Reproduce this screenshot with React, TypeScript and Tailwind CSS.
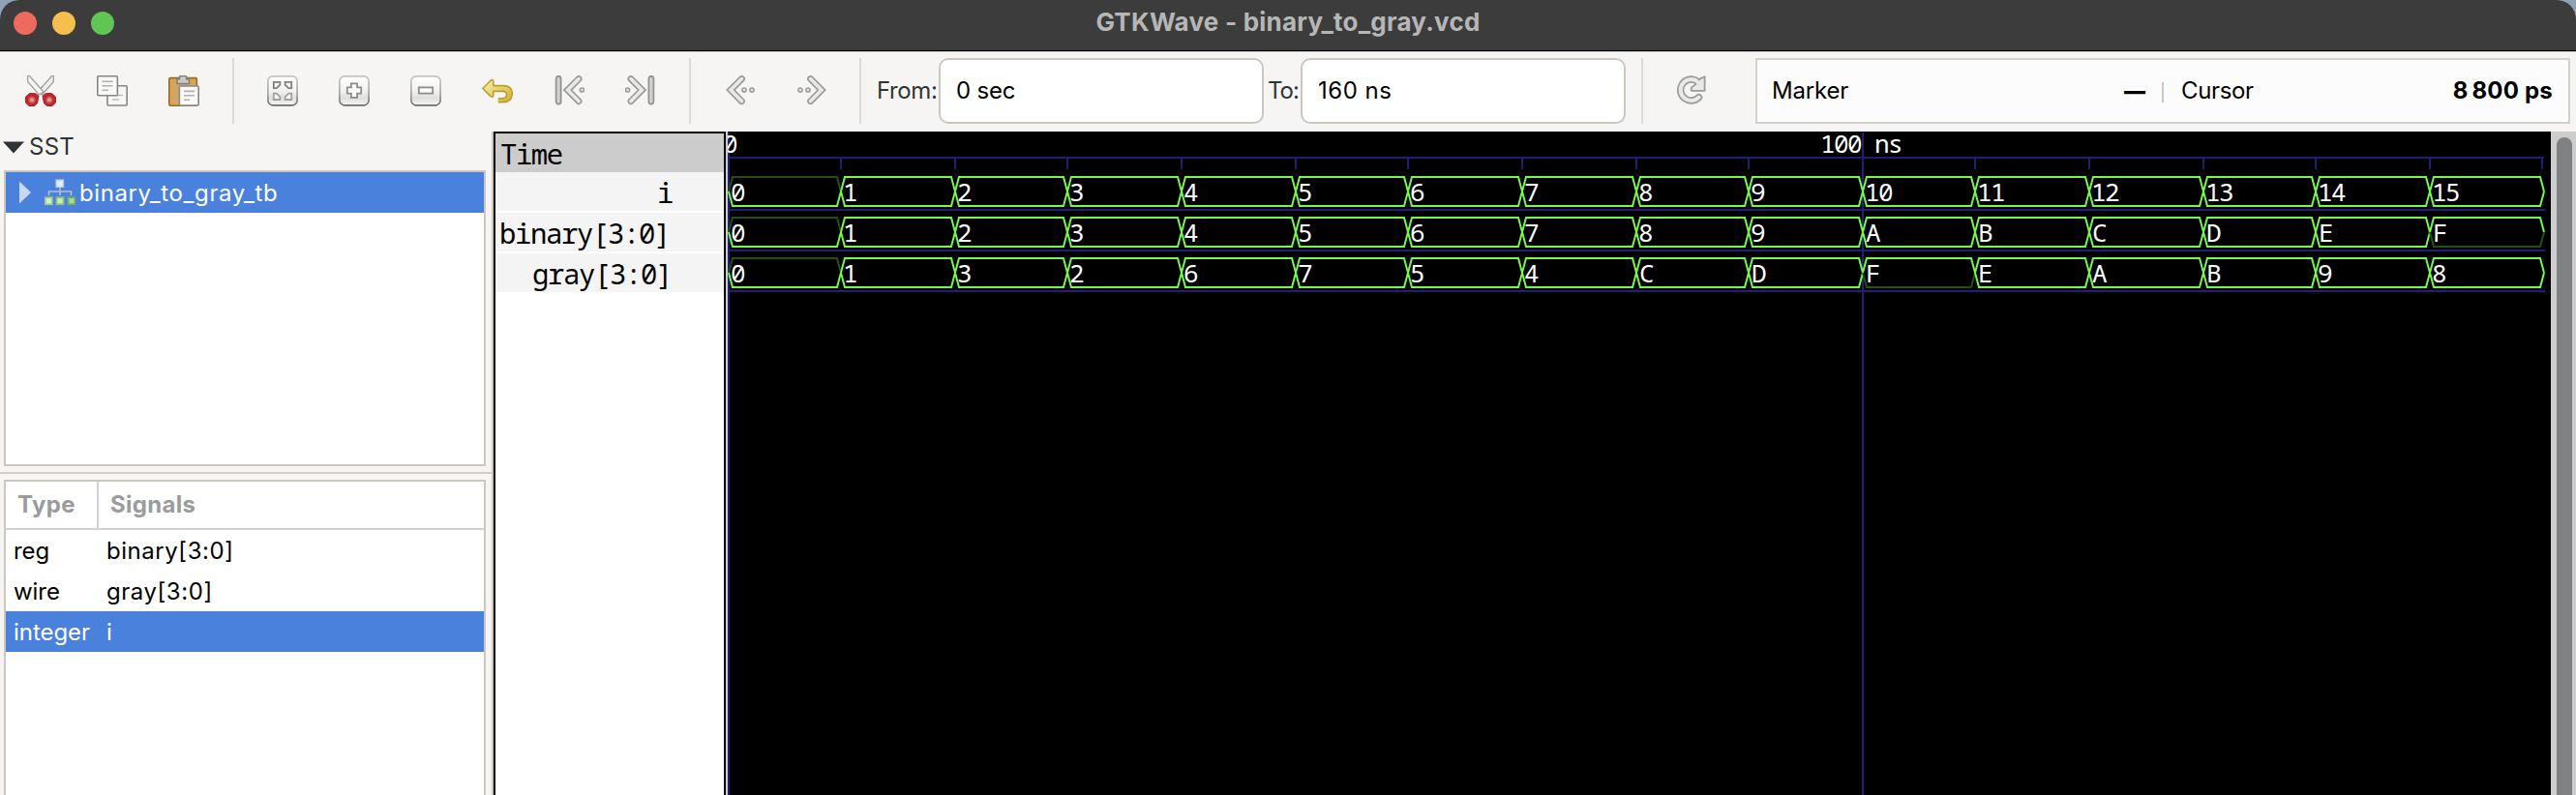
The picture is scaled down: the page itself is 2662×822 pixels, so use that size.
import type { ReactNode } from "react";

const MONO = "'Noto Sans Mono', 'DejaVu Sans Mono', monospace";

function Icon({ children, className = "" }: { children: ReactNode; className?: string }) {
  return (
    <svg viewBox="0 0 32 32" className={`h-8 w-8 shrink-0 ${className}`} fill="none">
      {children}
    </svg>
  );
}

function Defs() {
  return (
    <svg className="absolute h-0 w-0">
      <defs>
        <linearGradient id="btnFill" x1="0" y1="0" x2="0" y2="1">
          <stop offset="0" stopColor="#ffffff" />
          <stop offset="0.55" stopColor="#f0f0ef" />
          <stop offset="0.75" stopColor="#dededc" />
          <stop offset="1" stopColor="#f6f6f5" />
        </linearGradient>
        <linearGradient id="btnStroke" x1="0" y1="0" x2="0" y2="1">
          <stop offset="0" stopColor="#c3c5c0" />
          <stop offset="0.6" stopColor="#9fa19d" />
          <stop offset="1" stopColor="#6c6e69" />
        </linearGradient>
        <linearGradient id="undoFill" x1="0" y1="0" x2="1" y2="1">
          <stop offset="0" stopColor="#f9f1b4" />
          <stop offset="0.6" stopColor="#e2cb5c" />
          <stop offset="1" stopColor="#cdb036" />
        </linearGradient>
      </defs>
    </svg>
  );
}

function CutIcon() {
  return (
    <Icon>
      <path d="M29.3.5 V6.5 L17.5 20 L13 17 L27.5.5Z" fill="#eeeeec" stroke="#9a9c98" strokeWidth="1.2" />
      <path d="M2.7.5 V6.5 L14.5 20 L19 17 L4.5.5Z" fill="#f4f4f3" stroke="#9a9c98" strokeWidth="1.2" />
      <path d="M4.5 18.6H10.5L14 21.2L12.4 29L9.4 31.5H4L.6 28.2V22Z" fill="#b92a2c" stroke="#a42022" strokeWidth="1" strokeLinejoin="round" />
      <path d="M27.5 18.6H21.5L18 21.2L19.6 29L22.6 31.5H28L31.4 28.2V22Z" fill="#b92a2c" stroke="#a42022" strokeWidth="1" strokeLinejoin="round" />
      <circle cx="7" cy="25.3" r="2.8" fill="#cfa0a0" stroke="#dc5254" strokeWidth="1.6" />
      <circle cx="25" cy="25.3" r="2.8" fill="#cfa0a0" stroke="#dc5254" strokeWidth="1.6" />
    </Icon>
  );
}

function CopyIcon() {
  return (
    <Icon>
      <rect x="11" y="10.8" width="20.2" height="20.2" rx="1" fill="#f7f7f6" stroke="#868884" strokeWidth="1.6" />
      <path d="M16 20.5H27M16 25H23" stroke="#bdbebb" strokeWidth="1.6" />
      <rect x=".8" y=".8" width="20.6" height="20" rx="1" fill="#f9f9f8" stroke="#868884" strokeWidth="1.6" />
      <path d="M5.5 6.2H16.5M5.5 10.8H16.5M5.5 15.2H12" stroke="#b0b1ae" strokeWidth="1.6" />
    </Icon>
  );
}

function PasteIcon() {
  return (
    <Icon>
      <rect x=".8" y="2.6" width="28.6" height="28.6" rx="1.5" fill="#d3a562" stroke="#9c6b1d" strokeWidth="1.6" />
      <path d="M9 8.5V5.5Q9 3.8 11 3.8H11.5V1.5Q11.5.6 12.5.6H17.5Q18.6.6 18.6 1.5V3.8H19.5Q21.5 3.8 21.5 5.5V8.5Z" fill="#c9cac8" stroke="#7d7f7b" strokeWidth="1.4" />
      <rect x="11.4" y="11" width="19.8" height="20" rx="1" fill="#f9f9f8" stroke="#868884" strokeWidth="1.6" />
      <path d="M16 16.4H27M16 20.8H27M16 25.2H22" stroke="#b0b1ae" strokeWidth="1.6" />
    </Icon>
  );
}

function ButtonFrame({ children }: { children: ReactNode }) {
  return (
    <Icon>
      <rect x=".9" y=".9" width="30.2" height="29.8" rx="5" fill="url(#btnFill)" stroke="url(#btnStroke)" strokeWidth="1.6" />
      <path d="M4.5 31H27.5" stroke="#73756f" strokeWidth="1.2" />
      {children}
    </Icon>
  );
}

function ZoomFitIcon() {
  return (
    <ButtonFrame>
      <g strokeWidth="1.8" fill="#f7f7f6">
        <path d="M6.8 6.8H13.4V9.6L9.8 13.2H6.8Z" stroke="#7f817d" />
        <path d="M25.2 6.8H18.6V9.6L22.2 13.2H25.2Z" stroke="#7f817d" />
        <path d="M6.8 25H13.4V22.2L9.8 18.6H6.8Z" stroke="#a0a29e" />
        <path d="M25.2 25H18.6V22.2L22.2 18.6H25.2Z" stroke="#a0a29e" />
      </g>
    </ButtonFrame>
  );
}

function ZoomInIcon() {
  return (
    <ButtonFrame>
      <path d="M12.9 8.4H19.1V12.4H23.2V18.6H19.1V22.8H12.9V18.6H8.8V12.4H12.9Z" fill="#fdfdfd" stroke="#8b8d89" strokeWidth="1.8" />
    </ButtonFrame>
  );
}

function ZoomOutIcon() {
  return (
    <ButtonFrame>
      <rect x="8.8" y="12.4" width="14.4" height="6.2" fill="#fdfdfd" stroke="#8b8d89" strokeWidth="1.8" />
    </ButtonFrame>
  );
}

function UndoIcon() {
  return (
    <Icon>
      <path
        d="M.9 13.5L9 5.2Q11.8 3.6 11.8 6.2V10.6H22.5Q31.3 11 31.3 18.8Q31 27.4 22 27.6H16.5V23.8H21.5Q25.6 23.4 25.6 19.6Q25.2 16.6 21.5 16.4H11.8V20.6Q11.6 23 9 21.6Z"
        fill="url(#undoFill)"
      />
      <path
        d="M17 27.6H22Q31 27.4 31.3 18.8Q31.3 11 22.5 10.6H11.8V6.2Q11.8 3.6 9 5.2L.9 13.5L9 21.6Q11.6 23 11.8 20.6V16.4H21.5Q25.2 16.6 25.6 19.6Q25.6 23.4 21.5 23.8H17"
        stroke="#bba033"
        strokeWidth="1.6"
        strokeLinejoin="round"
      />
    </Icon>
  );
}

function Chevron({ d }: { d: string }) {
  return (
    <>
      <path d={d} stroke="#999b97" strokeWidth="7" strokeLinecap="round" />
      <path d={d} stroke="#e9e9e8" strokeWidth="3.6" strokeLinecap="round" />
    </>
  );
}

function Dot({ x }: { x: number }) {
  return <circle cx={x} cy="15" r="2.1" fill="#e6e6e5" stroke="#999b97" strokeWidth="1.5" />;
}

function FirstIcon() {
  return (
    <Icon>
      <rect x="2.6" y=".8" width="5" height="28.8" rx="2.5" fill="#d2d3d1" stroke="#8f918d" strokeWidth="1.7" />
      <Chevron d="M26 3.6L14.6 15.1L26 26.6" />
      <Dot x={29.4} />
    </Icon>
  );
}

function LastIcon() {
  return (
    <Icon>
      <rect x="24.4" y=".8" width="5" height="28.8" rx="2.5" fill="#d2d3d1" stroke="#8f918d" strokeWidth="1.7" />
      <Chevron d="M6 3.6L17.4 15.1L6 26.6" />
      <Dot x={2.6} />
    </Icon>
  );
}

function BackIcon() {
  return (
    <Icon>
      <Chevron d="M18.4 3.6L7 15.1L18.4 26.6" />
      <Dot x={21} />
      <Dot x={29} />
    </Icon>
  );
}

function ForwardIcon() {
  return (
    <Icon>
      <Chevron d="M15.6 3.6L27 15.1L15.6 26.6" />
      <Dot x={13} />
      <Dot x={5} />
    </Icon>
  );
}

function ReloadIcon() {
  return (
    <Icon>
      <path d="M23.6 22.6A11 11 0 1 1 20.6 5.2" stroke="#999b97" strokeWidth="7.4" strokeLinecap="round" />
      <path d="M29.6 1.2V15.8H15.8V12.6L19.6 9.6L25 3.4L29.6 1.2Z" fill="#e9e9e8" stroke="#999b97" strokeWidth="1.8" strokeLinejoin="round" />
      <path d="M23.6 22.6A11 11 0 1 1 20.6 5.2L23.6 8.2" stroke="#e9e9e8" strokeWidth="4" strokeLinecap="round" />
    </Icon>
  );
}

function HierarchyIcon() {
  return (
    <svg viewBox="0 0 32 28" className="h-7 w-8 shrink-0" fill="none">
      <path d="M16 8V12M4.5 17V13H27.5V17M16 13V17" stroke="#b9bdc6" strokeWidth="1.6" />
      <rect x="12" y="1" width="7.6" height="7.4" fill="#e4ecf8" stroke="#b2caf1" strokeWidth="1.2" />
      <rect x=".8" y="19.2" width="7" height="7" fill="#d6edcc" stroke="#9ccc8c" strokeWidth="1.8" />
      <rect x="12.5" y="19.2" width="7" height="7" fill="#cfe9c4" stroke="#8cc47c" strokeWidth="1.8" />
      <rect x="24.5" y="19.2" width="7" height="7" fill="#aed79c" stroke="#6fb05c" strokeWidth="1.8" />
    </svg>
  );
}

function Separator({ className = "" }: { className?: string }) {
  return <div className={`h-[68px] w-[2px] shrink-0 bg-[#dddbd8] ${className}`} />;
}

function Entry({ value, className = "" }: { value: string; className?: string }) {
  return (
    <div className="flex h-[68px] w-[336px] shrink-0 items-center rounded-[10px] border-2 border-[#cdc7c2] bg-white pl-4 text-black">
      <span className={className}>{value}</span>
    </div>
  );
}

function TitleBar() {
  return (
    <div className="bg-[#8fa3b5]">
      <header className="flex h-[52px] items-center rounded-t-[20px] bg-[#3c3c3c]">
        <div className="flex w-[500px] gap-4 pb-1 pl-[14px]">
          <div className="h-6 w-6 rounded-full bg-[#ed6a5e]" />
          <div className="h-6 w-6 rounded-full bg-[#f5bf4f]" />
          <div className="h-6 w-6 rounded-full bg-[#61c554]" />
        </div>
        <div className="flex-1 pb-[6px] text-center text-[26px] font-bold tracking-[0.23px] text-[#b6b6b6]">
          GTKWave - binary_to_gray.vcd
        </div>
        <div className="w-[500px]" />
      </header>
    </div>
  );
}

function Toolbar() {
  return (
    <div className="flex h-[84px] items-start border-t border-black">
      <div className="flex h-[83px] w-full items-start border-t border-[#cfcdcb] pt-[6px]">
        <div className="flex h-[68px] items-center gap-[42px] pl-[26px]">
          <CutIcon />
          <CopyIcon />
          <PasteIcon />
        </div>
        <Separator className="ml-[34px]" />
        <div className="flex h-[68px] items-center gap-[42px] pl-[34px]">
          <ZoomFitIcon />
          <ZoomInIcon />
          <ZoomOutIcon />
          <UndoIcon />
          <FirstIcon />
          <LastIcon />
        </div>
        <Separator className="ml-[34px]" />
        <div className="flex h-[68px] items-center gap-[42px] pl-[34px]">
          <BackIcon />
          <ForwardIcon />
        </div>
        <Separator className="ml-[34px]" />
        <div className="ml-4 flex h-[68px] w-[64px] shrink-0 items-center tracking-[-0.4px]">From:</div>
        <Entry value="0 sec" className="tracking-[-0.2px]" />
        <div className="flex h-[68px] w-[38px] shrink-0 items-center pl-1 tracking-[-1px]">To:</div>
        <Entry value="160 ns" className="tracking-[0.5px]" />
        <Separator className="ml-4" />
        <div className="flex h-[68px] items-center pl-[34px]">
          <ReloadIcon />
        </div>
        <div className="ml-[50px] flex h-[68px] w-[842px] items-center border-2 border-[#d3d1cb] bg-[#fcfcfc] pl-[15px] text-black">
          <span className="w-[300px] tracking-[-0.2px]">Marker</span>
          <span className="w-[86px] text-right text-[22px] font-black">—</span>
          <div className="mt-[3px] ml-[17px] h-[21px] w-[2px] bg-[#c8c8c8]" />
          <span className="ml-[18px] w-[200px] tracking-[-0.35px]">Cursor</span>
          <span className="flex-1 pr-4 text-right font-bold tracking-[0.2px]">8&#8201;800 ps</span>
        </div>
      </div>
    </div>
  );
}

const SIGNALS = [
  { type: "reg", name: "binary[3:0]", selected: false },
  { type: "wire", name: "gray[3:0]", selected: false },
  { type: "integer", name: "i", selected: true },
];

function Sidebar() {
  return (
    <aside className="flex w-[508px] shrink-0 flex-col">
      <div className="flex h-10 items-center pb-2 pl-[3px]">
        <svg viewBox="0 0 22 13" className="mr-[5px] h-[13px] w-[22px]">
          <path d="M0 .5H22L11 12.5Z" fill="#2e3436" />
        </svg>
        <span className="tracking-[0.25px]">SST</span>
      </div>
      <div className="ml-1 h-[306px] w-[498px] border-2 border-[#cdc7c2] bg-white">
        <div className="flex h-[42px] items-center bg-[#4a81dd] pl-[14px] text-white">
          <svg viewBox="0 0 12 24" className="mr-[14px] h-6 w-3">
            <path d="M0 .5L12 12L0 23.5Z" fill="#c8d8f4" />
          </svg>
          <HierarchyIcon />
          <span className="ml-1 pt-[2px] tracking-[0.6px]">binary_to_gray_tb</span>
        </div>
      </div>
      <div className="mt-[6px] h-[2px] bg-[#d3cdc8]" />
      <div className="mt-[6px] ml-1 w-[498px] flex-1 border-2 border-b-0 border-[#cdc7c2] bg-white text-black">
        <div className="flex h-[50px] border-b-2 border-[#d5d0cc] font-bold text-[#999b9c]">
          <div className="flex w-[96px] items-center border-r-2 border-[#d5d0cc] pl-3 tracking-[0.4px]">Type</div>
          <div className="flex items-center pl-[12px] tracking-[0.3px]">Signals</div>
        </div>
        {SIGNALS.map((s) => (
          <div key={s.name} className={`flex h-[42px] items-center pt-[2px] pl-2 ${s.selected ? "bg-[#4a81dd] text-white" : ""}`}>
            <span className="w-24 tracking-[-0.05px]">{s.type}</span>
            <span className="tracking-[0.55px]">{s.name}</span>
          </div>
        ))}
      </div>
    </aside>
  );
}

function SignalNames() {
  return (
    <div className="w-[242px] shrink-0 border-l-2 border-[#cdc7c2]">
      <div className="h-full border-2 border-b-0 border-black bg-white text-[29px] tracking-[-1.4px] text-black" style={{ fontFamily: MONO }}>
        <div className="flex h-10 items-center bg-[#cccccc] pl-[5px] tracking-[-1.5px]">Time</div>
        <div className="mb-[2px] flex h-10 items-center justify-end bg-[#f4f4f4] pr-[53px]">i</div>
        <div className="mb-[2px] flex h-10 items-center justify-end bg-[#f4f4f4] pr-[56px]">binary[3:0]</div>
        <div className="flex h-10 items-center justify-end bg-[#f4f4f4] pr-[54px]">gray[3:0]</div>
      </div>
    </div>
  );
}

const ROWS = [
  { values: Array.from({ length: 16 }, (_, i) => String(i)), max: "" },
  { values: Array.from({ length: 16 }, (_, i) => i.toString(16).toUpperCase()), max: "F" },
  { values: Array.from({ length: 16 }, (_, i) => (i ^ (i >> 1)).toString(16).toUpperCase()), max: "F" },
];
const edge = (n: number) => 1 + 2 * Math.floor(58.61 * n + 0.16);
const BLUE = "#202073";
const BRIGHT = "#75f94c";
const DIM = "#234f15";

function Waves() {
  return (
    <svg width="1884" height="686" viewBox="0 0 1884 686" className="block shrink-0 bg-black" fill="none">
      <g stroke={BLUE} strokeWidth="2">
        <path d="M0 27H1877" />
        {ROWS.map((_, r) => (
          <path key={r} d={`M0 ${81 + 42 * r}H1878`} />
        ))}
        {Array.from({ length: 17 }, (_, n) => (
          <path key={n} d={n % 10 === 0 ? `M${edge(n)} 1V686` : `M${edge(n)} 28V39`} />
        ))}
      </g>
      {ROWS.map((row, r) => {
        const t = 47 + 42 * r;
        const m = t + 15;
        const b = t + 30;
        return (
          <g key={r}>
            {row.values.map((v, n) => {
              const x = edge(n);
              const e = n === 15 ? edge(16) + 2 : edge(n + 1);
              return (
                <g key={n} strokeWidth="2">
                  <path d={`M${x} ${m}L${x + 4} ${t}H${e - 4}L${e} ${m}`} stroke={v === "0" ? DIM : BRIGHT} />
                  <path d={`M${x} ${m}L${x + 4} ${b}H${e - 4}L${e} ${m}`} stroke={v === row.max ? DIM : BRIGHT} />
                </g>
              );
            })}
          </g>
        );
      })}
      <g fill="#ffffff" fontFamily={MONO} fontSize="26" letterSpacing="-1.6">
        <text x="-5" y="22">0</text>
        <text x="1129" y="22">100 ns</text>
        {ROWS.map((row, r) =>
          row.values.map((v, n) => (
            <text key={`${r}-${n}`} x={edge(n) + (v >= "A" ? 3 : 2)} y={72 + 42 * r}>
              {v}
            </text>
          )),
        )}
      </g>
    </svg>
  );
}

export default function App() {
  return (
    <div className="flex h-[822px] w-[2662px] flex-col overflow-hidden bg-[#f6f5f4] font-['Inter',sans-serif] text-[24px] leading-none text-[#2e3436]">
      <Defs />
      <TitleBar />
      <Toolbar />
      <main className="flex h-[686px]">
        <Sidebar />
        <SignalNames />
        <div className="w-[2px] shrink-0 bg-[#cdcdcd]" />
        <Waves />
        <div className="flex-1 overflow-hidden bg-[#cdcdcd] pt-[6px] pl-[6px]">
          <div className="h-[720px] w-4 rounded-full bg-[#7f8182]" />
        </div>
      </main>
    </div>
  );
}
